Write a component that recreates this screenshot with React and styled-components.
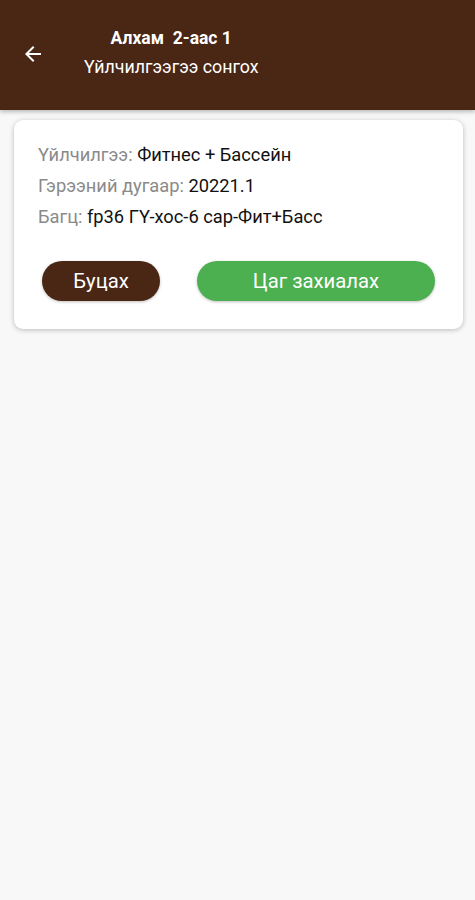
import React from 'react'
import styled, { createGlobalStyle } from 'styled-components'

const GlobalStyle = createGlobalStyle`
  html, body {
    margin: 0;
    padding: 0;
    background: #f8f8f8;
    font-family: Roboto, "Noto Sans", sans-serif;
  }
`

const Page = styled.div`
  min-height: 900px;
  background: #f8f8f8;
`

const Header = styled.header`
  height: 110px;
  background: #4a2615;
  display: flex;
  align-items: center;
  padding-left: 21px;
  box-sizing: border-box;
  box-shadow: 0 2px 4px rgba(0, 0, 0, 0.25);
`

const BackButton = styled.div`
  width: 24px;
  height: 24px;
  display: flex;
  align-items: center;
  justify-content: center;
  margin-top: -3px;
  color: #fff;
`

const Titles = styled.div`
  display: flex;
  flex-direction: column;
  align-items: center;
  margin-left: 39px;
  margin-top: -6px;
  gap: 8px;
`

const Title = styled.div`
  color: #fff;
  font-size: 17.5px;
  font-weight: 700;
  white-space: pre;
`

const Subtitle = styled.div`
  color: #fff;
  font-size: 17.8px;
`

const Card = styled.div`
  margin: 10px 12px 0 14px;
  background: #fff;
  border-radius: 9px;
  box-shadow: 0 1px 5px rgba(0, 0, 0, 0.25);
  padding: 25px 24px 28px 24px;
  display: flex;
  flex-direction: column;
`

const InfoList = styled.div`
  display: flex;
  flex-direction: column;
  gap: 11px;
`

const InfoRow = styled.div`
  font-size: 18.3px;
  line-height: 20px;
  color: #111;
`

const Label = styled.span`
  color: #8a8a8a;
`

const Actions = styled.div`
  display: flex;
  gap: 37px;
  margin-top: 34px;
  padding-left: 4px;
  padding-right: 4px;
`

const Button = styled.button`
  height: 40px;
  border: none;
  border-radius: 20px;
  color: #fff;
  font-family: Roboto, "Noto Sans", sans-serif;
  font-size: 20.3px;
  background: ${p => (p.$primary ? '#4caf50' : '#4a2615')};
  width: ${p => (p.$primary ? '238px' : '118px')};
  box-shadow: 0 1px 3px rgba(0, 0, 0, 0.25);
  padding: 0;
`

const ArrowIcon = () => (
  <svg width="24" height="24" viewBox="0 0 24 24" fill="#fff">
    <path d="M20 11H7.83l5.59-5.59L12 4l-8 8 8 8 1.41-1.41L7.83 13H20v-2z" />
  </svg>
)

const App = () => {
  return (
    <Page>
      <GlobalStyle />
      <Header>
        <BackButton>
          <ArrowIcon />
        </BackButton>
        <Titles>
          <Title>{'Алхам  2-аас 1'}</Title>
          <Subtitle>Үйлчилгээгээ сонгох</Subtitle>
        </Titles>
      </Header>
      <Card>
        <InfoList>
          <InfoRow>
            <Label>Үйлчилгээ: </Label>Фитнес + Бассейн
          </InfoRow>
          <InfoRow>
            <Label>Гэрээний дугаар: </Label>20221.1
          </InfoRow>
          <InfoRow>
            <Label>Багц: </Label>fp36 ГҮ-хос-6 сар-Фит+Басс
          </InfoRow>
        </InfoList>
        <Actions>
          <Button>Буцах</Button>
          <Button $primary>Цаг захиалах</Button>
        </Actions>
      </Card>
    </Page>
  )
}

export default App
